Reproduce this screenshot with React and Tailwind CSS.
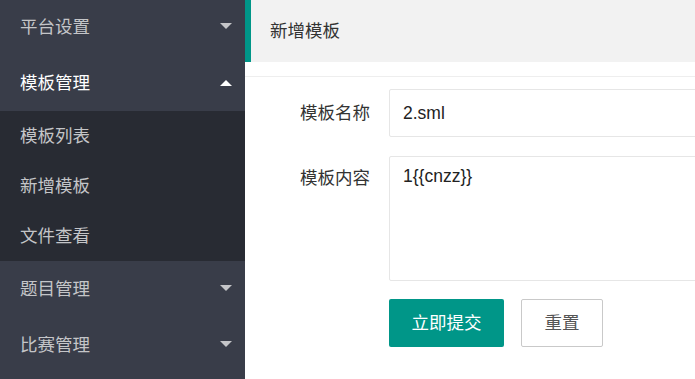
const menu = [
  { name: '平台设置', open: false },
  { name: '模板管理', open: true, children: ['模板列表', '新增模板', '文件查看'] },
  { name: '题目管理', open: false },
  { name: '比赛管理', open: false },
]

const Caret = ({ up }) => (
  <span
    className={
      up
        ? 'w-0 h-0 border-x-[6px] border-x-transparent border-b-[6px] border-b-white'
        : 'w-0 h-0 border-x-[6px] border-x-transparent border-t-[6px] border-t-[#c4c5c8] mt-[-3px]'
    }
  />
)

const Sidebar = () => (
  <div className="w-[245px] shrink-0 h-[379px] bg-[#393d49] overflow-hidden">
    <ul className="-mt-[1px]">
      {menu.map((item) => (
        <li key={item.name}>
          <div
            className={`h-[56px] flex items-center justify-between pl-[20px] pr-[13px] text-[17.5px] ${
              item.open ? 'text-white' : 'text-[#c4c5c8]'
            }`}
          >
            <span>{item.name}</span>
            <Caret up={item.open} />
          </div>
          {item.children && (
            <div className="bg-[#282b33]">
              {item.children.map((c) => (
                <div key={c} className="h-[50px] flex items-center pl-[20px] text-[17.5px] text-[#c4c5c8]">
                  {c}
                </div>
              ))}
            </div>
          )}
        </li>
      ))}
    </ul>
  </div>
)

const App = () => {
  return (
    <div
      className="flex w-[695px] h-[379px] overflow-hidden bg-white"
      style={{ fontFamily: '"Liberation Sans", "Noto Sans CJK SC", sans-serif' }}
    >
      <Sidebar />
      <div className="flex-1 min-w-0 overflow-hidden">
        <div className="h-[62px] bg-[#f2f2f2] border-l-[6px] border-[#009688] flex items-center pl-[19px] text-[17.5px] text-[#333]">
          新增模板
        </div>
        <div className="mt-[14px] h-px bg-[#eeeeee]" />
        <div className="pt-[12px]">
          <div className="flex items-center">
            <label className="w-[144px] shrink-0 text-right pr-[19px] text-[17.5px] text-[#333]">模板名称</label>
            <input
              readOnly
              value="2.sml"
              className="w-[340px] shrink-0 h-[48px] border border-[#e6e6e6] rounded-[2px] pl-[13px] text-[17.5px] text-[#222] outline-none"
            />
          </div>
          <div className="flex items-start mt-[19px]">
            <label className="w-[144px] shrink-0 text-right pr-[19px] pt-[10px] leading-[24px] text-[17.5px] text-[#333]">
              模板内容
            </label>
            <textarea
              readOnly
              value="1{{cnzz}}"
              className="w-[340px] shrink-0 h-[125px] border border-[#e6e6e6] rounded-[2px] pl-[13px] pt-[7px] leading-[24px] text-[17.5px] text-[#222] outline-none resize-none"
            />
          </div>
          <div className="flex gap-[17px] pl-[144px] mt-[18px]">
            <button className="w-[115px] h-[48px] bg-[#009688] text-white text-[17.5px] rounded-[2px]">立即提交</button>
            <button className="w-[82px] h-[48px] bg-white border border-[#c9c9c9] text-[#555] text-[17.5px] rounded-[2px]">
              重置
            </button>
          </div>
        </div>
      </div>
    </div>
  )
}

export default App
